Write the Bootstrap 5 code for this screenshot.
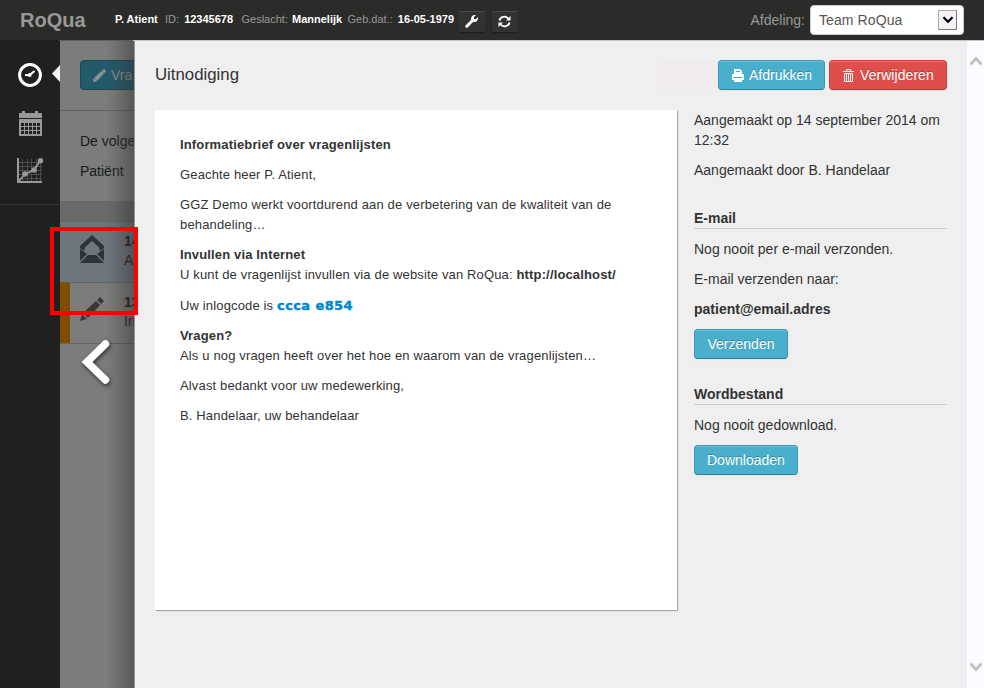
<!DOCTYPE html>
<html lang="nl">
<head>
<meta charset="utf-8">
<meta name="viewport" content="width=device-width, initial-scale=1">
<title>RoQua - Uitnodiging</title>
<link href="https://cdn.jsdelivr.net/npm/bootstrap@5.3.0/dist/css/bootstrap.min.css" rel="stylesheet">
<style>
  body { font: 14px/20px "Liberation Sans", Arial, sans-serif; color: #333; height: 688px; background: #efefef; }
  p { margin-bottom: 10px; }
  svg { display: block; flex: none; }
  .topbar { height: 41px; background: #2b2c2a; color: #999; border-bottom: 1px solid #c4c4c4; border-image: linear-gradient(90deg, #1c1c1c 60px, #5e605d 60px, #5e605d 134px, #c4c4c4 134px) 1; }
  .topbar-inner { height: 40px; padding-left: 20px; padding-right: 20px; }
  .brand { font-size: 20px; font-weight: bold; color: #999; width: 95px; }
  .patient { font-size: 11px; white-space: pre; margin-top: -2px; }
  .patient b { color: #fff; }
  .patient span { display: inline-block; }
  .tool { width: 26px; height: 20px; background: #323331; border-radius: 2px; box-shadow: 0 -1px #4a4b49, 0 1px 1px #1e1e1e; color: #fff; margin-top: 3px; }
  .team { width: 154px; height: 30px; border: 1px solid #ccc; border-radius: 4px; background: #fff; color: #555; padding: 0 6px 0 8px; margin-left: 5px; letter-spacing: .1px; }
  .drop { width: 19px; height: 20px; border: 1px solid #777; border-top-color: #aaa; border-left-color: #aaa; background: #f7f0f7; }
  .sidebar { width: 60px; background: #202020; color: #999; flex: none; }
  .side-icons { height: 164px; border-bottom: 1px solid #373737; padding-top: 22px; }
  .side-icons div { height: 47.5px; }
  .pointer { left: 52px; top: 24px; }
  .behind { width: 75px; background: #7b7d7a; color: #1a1a1a; flex: none; white-space: nowrap; }
  .behind::after { content: ""; position: absolute; inset: 0 0 0 45px; background: linear-gradient(90deg, rgba(60,60,60,0), rgba(60,60,60,.15) 35%, rgba(50,50,50,.5)); border-right: 1px solid #999; }
  .behind-head { height: 70px; border-bottom: 1px solid #626361; padding: 19px 0 0 20px; }
  .btn-dim { width: 90px; height: 30px; background: #23596a; border: 1px solid #1c4855; border-radius: 4px; color: #8d9294; padding-left: 12px; gap: 5px; }
  .behind-text { height: 90px; padding: 20px 0 0 20px; }
  .strip { height: 20px; background: #696b68; }
  .entry { height: 61px; border-top: 1px solid #636562; }
  .entry-sel { background: #6d757d; }
  .entry-body { line-height: 19px; font-size: 14px; padding-top: 10px; }
  .orange { border-left: 10px solid #7f4c00; }
  .back { left: 81px; top: 339px; filter: drop-shadow(1px 2px 2px rgba(0,0,0,.6)); }
  .frame { left: 50px; top: 227px; width: 88px; height: 88px; border: 4px solid #f00; }
  .panel { background: #efefef; padding: 19px 20px 0 20px; }
  .heading { font-size: 16.8px; }
  .panel-head { height: 30px; }
  .ghost { width: 60px; height: 30px; background: #f0ebee; border-radius: 4px 0 0 4px; }
  .btn.rq { font-size: 14px; line-height: 20px; height: 30px; padding: 4px 12px; border-radius: 4px; color: #fff; text-shadow: 0 -1px 0 rgba(0,0,0,.25); background: #49afcd; border: 1px solid #3f99b4; border-bottom-color: #2f7f97; box-shadow: inset 0 1px 0 rgba(255,255,255,.2), 0 1px 2px rgba(0,0,0,.05); }
  .btn.rq-print { width: 107px; padding-right: 0; }
  .btn.rq-red { width: 118px; padding-right: 0; letter-spacing: .06px; background: #df4e4a; border-color: #c74340; border-bottom-color: #b03a37; }
  .btn.rq-send { width: 94px; }
  .letter { width: 522px; height: 500px; background: #fff; box-shadow: 1px 1px 1px #aaa; padding: 25px; font-size: 13px; letter-spacing: .148px; margin-top: 20px; flex: none; }
  .code { color: #0088cc; font-family: "DejaVu Sans", sans-serif; font-size: 13px; letter-spacing: .4px; -webkit-text-stroke: .4px #0088cc; }
  .aside-col { width: 253px; margin-left: 17px; padding-top: 20px; }
  .aside-col h2 { font: bold 14px/20px "Liberation Sans", Arial, sans-serif; border-bottom: 1px solid #ccc; margin: 0 0 10px; height: 21px; }
  .scroller { width: 17px; background: #fdfaff; flex: none; padding: 15px 0 16px 3px; }
</style>
</head>
<body class="overflow-hidden position-relative">
<header class="topbar">
  <div class="topbar-inner d-flex align-items-center">
    <div class="brand">RoQua</div>
    <div class="patient d-flex"><span style="width:50px"><b>P. Atient</b></span><span style="width:76.5px">ID: <b class="ms-1" style="margin-left:2px!important">12345678</b></span><span style="width:106px">Geslacht: <b style="margin-left:1px">Mannelijk</b></span><span style="width:111px">Geb.dat.: <b style="margin-left:2px">16-05-1979</b></span></div>
    <div class="d-flex gap-1">
      <div class="tool d-flex align-items-center justify-content-center me-1"><svg width="13" height="13" viewBox="0 0 13 13"><path d="M1.8 11.2 8 5" stroke="#fff" stroke-width="3" stroke-linecap="round"/><path d="M11 0 8.8 2.2l.3 1.7 1.7.3L13 2.1C13.4 4.6 11.8 7 9.3 7 6.800 7 5.600 4.800 6.200 2.800 6.800.7 9-.5 11 0Z" fill="#fff"/></svg></div>
      <div class="tool d-flex align-items-center justify-content-center" style="margin-left:-1px"><svg width="13" height="13" viewBox="0 0 13 13" fill="none" stroke="#fff" stroke-width="1.800"><path d="M1.500 5.500C2.200 1.500 7.500.2 10.300 3.500M11.500 7.500C10.800 11.500 5.500 12.800 2.700 9.500"/><path d="M12.500 1v4.500H8ZM.5 12V7.500H5Z" fill="#fff" stroke="none"/></svg></div>
    </div>
    <div class="ms-auto">Afdeling:</div>
    <div class="team d-flex align-items-center justify-content-between">Team RoQua
      <span class="drop d-flex align-items-center justify-content-center"><svg width="12" height="8" viewBox="0 0 12 8"><path d="m1.500 1.200 4.500 4.500 4.500-4.500" fill="none" stroke="#000" stroke-width="2.300"/></svg></span>
    </div>
  </div>
</header>
<div class="d-flex" style="height:647px">
  <nav class="sidebar position-relative">
    <div class="side-icons">
      <div><svg class="mx-auto" width="24" height="24" viewBox="0 0 24 24" fill="none" stroke="#fff"><circle cx="12" cy="12" r="10.400" stroke-width="3"/><path d="m7 12 4.500.3L16.500 8" stroke-width="2"/><circle cx="11.700" cy="12" r="1.900" fill="#fff" stroke="none"/></svg></div>
      <div><svg class="mx-auto" width="24" height="26" viewBox="0 0 24 26"><path d="M1 2h3V0h3v2h10V0h3v2h4v5H1ZM1 8h23v17H1Z" fill="#999"/><path d="M3 12h3v3H3Zm4 0h3v3H7Zm4 0h3v3h-3Zm4 0h3v3h-3Zm4 0h3v3h-3ZM3 16h3v3H3Zm4 0h3v3H7Zm4 0h3v3h-3Zm4 0h3v3h-3Zm4 0h3v3h-3ZM3 20h3v3H3Zm4 0h3v3H7Zm4 0h3v3h-3Zm4 0h3v3h-3Zm4 0h3v3h-3Z" fill="#202020"/></svg></div>
      <div><svg class="ms-3" width="28" height="26" viewBox="0 0 28 26" fill="none" stroke="#999"><path d="M6.500 1v23M11.500 1v23M15.500 1v23M20.500 1v23M24.500 1v23M3 4.500h23M3 8.500h23M3 12.500h23M3 16.500h23M3 20.500h23" stroke="#4c4c4c"/><path d="M2 0v24h24" stroke-width="2"/><path d="m3 23 6-7 9-4 6-9" stroke-width="1.800"/><g fill="#999" stroke="none"><circle cx="9" cy="16" r="2.700"/><circle cx="18" cy="12" r="2.700"/><circle cx="24.500" cy="2.700" r="2.700"/></g></svg></div>
    </div>
    <svg class="pointer position-absolute" width="8" height="17" viewBox="0 0 8 17"><path d="M8 0v17L0 8.500Z" fill="#f4f4f4"/></svg>
  </nav>
  <section class="behind position-relative overflow-hidden">
    <div class="behind-head"><div class="btn-dim d-flex align-items-center"><svg width="13" height="13" viewBox="0 0 24 24"><path d="m0 24 2-7 5 5ZM3 16 16 4l4 4L8 21ZM17 3l3-3 4 4-3 3Z" fill="#8d9294" stroke="#8d9294"/></svg>Vra</div></div>
    <div class="behind-text"><p>De volge</p><p>Patiënt</p></div>
    <div class="strip"></div>
    <div class="entry entry-sel d-flex">
      <svg width="24" height="28" viewBox="0 0 24 28" style="margin:13px 20px 0"><path d="M12 0 24 11v2l-4 3-1-4-7-6-7 6-1 4-4-3v-2ZM0 14l7 5-7 7Zm24 0-7 5 7 7ZM8 20h8l8 8H0Z" fill="#2c3235"/></svg>
      <div class="entry-body"><b>14</b><br>Aa</div>
    </div>
    <div class="entry orange d-flex">
      <svg width="24" height="24" viewBox="0 0 24 24" style="margin:14px 20px 0 10px"><path d="m0 24 2-7 5 5ZM3 16 16 4l4 4L8 21ZM17 3l3-3 4 4-3 3Z" fill="#363836"/></svg>
      <div class="entry-body"><b>13</b><br>In</div>
    </div>
    <div class="entry"></div>
  </section>
  <main class="panel flex-grow-1">
    <div class="panel-head d-flex align-items-center">
      <div class="heading">Uitnodiging</div>
      <div class="ghost ms-auto"></div>
      <button class="btn rq rq-print d-flex align-items-center me-1"><svg width="14" height="13" viewBox="0 0 14 13" class="me-1"><path d="M3 0h6l2 2v3H3Z" fill="#fff"/><path d="M5 2.500h4" stroke="#49afcd"/><path d="M2 5h10q1 0 1 1v5H1V6q0-1 1-1Z" fill="#fff"/><path d="M2.500 8.500h9" stroke="#49afcd" stroke-width="1"/><path d="M3 9.500h8V13H3Z" fill="#fff"/></svg>Afdrukken</button>
      <button class="btn rq rq-red d-flex align-items-center"><svg width="13" height="13" viewBox="0 0 13 13" style="margin-right:5px"><path d="M4.500 2V.6h4V2M1 2.500h11M2.500 4.500h8v8h-8Z" fill="none" stroke="#fff" stroke-width="1"/><path d="M4.500 4v8M6.500 4v8M8.500 4v8" stroke="#fff" stroke-width=".9"/></svg>Verwijderen</button>
    </div>
    <div class="d-flex">
      <article class="letter">
        <p><b>Informatiebrief over vragenlijsten</b></p>
        <p>Geachte heer P. Atient,</p>
        <p>GGZ Demo werkt voortdurend aan de verbetering van de kwaliteit van de<br>behandeling…</p>
        <p style="margin-bottom:11px"><b>Invullen via Internet</b><br>U kunt de vragenlijst invullen via de website van RoQua: <b>http://localhost/</b></p>
        <p>Uw inlogcode is <b class="code">ccca e854</b></p>
        <p><b>Vragen?</b><br>Als u nog vragen heeft over het hoe en waarom van de vragenlijsten…</p>
        <p>Alvast bedankt voor uw medewerking,</p>
        <p>B. Handelaar, uw behandelaar</p>
      </article>
      <aside class="aside-col">
        <p>Aangemaakt op 14 september 2014 om 12:32</p>
        <p>Aangemaakt door B. Handelaar</p>
        <h2 style="margin-top:28px">E-mail</h2>
        <p>Nog nooit per e-mail verzonden.</p>
        <p>E-mail verzenden naar:</p>
        <p><b>patient@email.adres</b></p>
        <button class="btn rq rq-send d-block">Verzenden</button>
        <h2 style="margin-top:25px">Wordbestand</h2>
        <p>Nog nooit gedownload.</p>
        <button class="btn rq d-block">Downloaden</button>
      </aside>
    </div>
  </main>
  <div class="scroller d-flex flex-column justify-content-between">
    <svg width="12" height="11" viewBox="0 0 12 11"><path d="m.5 8.500 5.500-6 5.500 6" fill="none" stroke="#bfbfbf" stroke-width="2.600"/></svg>
    <svg width="12" height="11" viewBox="0 0 12 11"><path d="m.5 2.500 5.500 6 5.500-6" fill="none" stroke="#bfbfbf" stroke-width="2.600"/></svg>
  </div>
</div>
<svg class="back position-absolute" width="30" height="46" viewBox="0 0 30 46"><path d="M24.500 5 6 23l18.500 18" fill="none" stroke="#fff" stroke-width="7.500" stroke-linecap="round" stroke-linejoin="miter"/></svg>
<div class="frame position-absolute"></div>
<script src="https://cdn.jsdelivr.net/npm/bootstrap@5.3.0/dist/js/bootstrap.bundle.min.js"></script>
</body>
</html>
